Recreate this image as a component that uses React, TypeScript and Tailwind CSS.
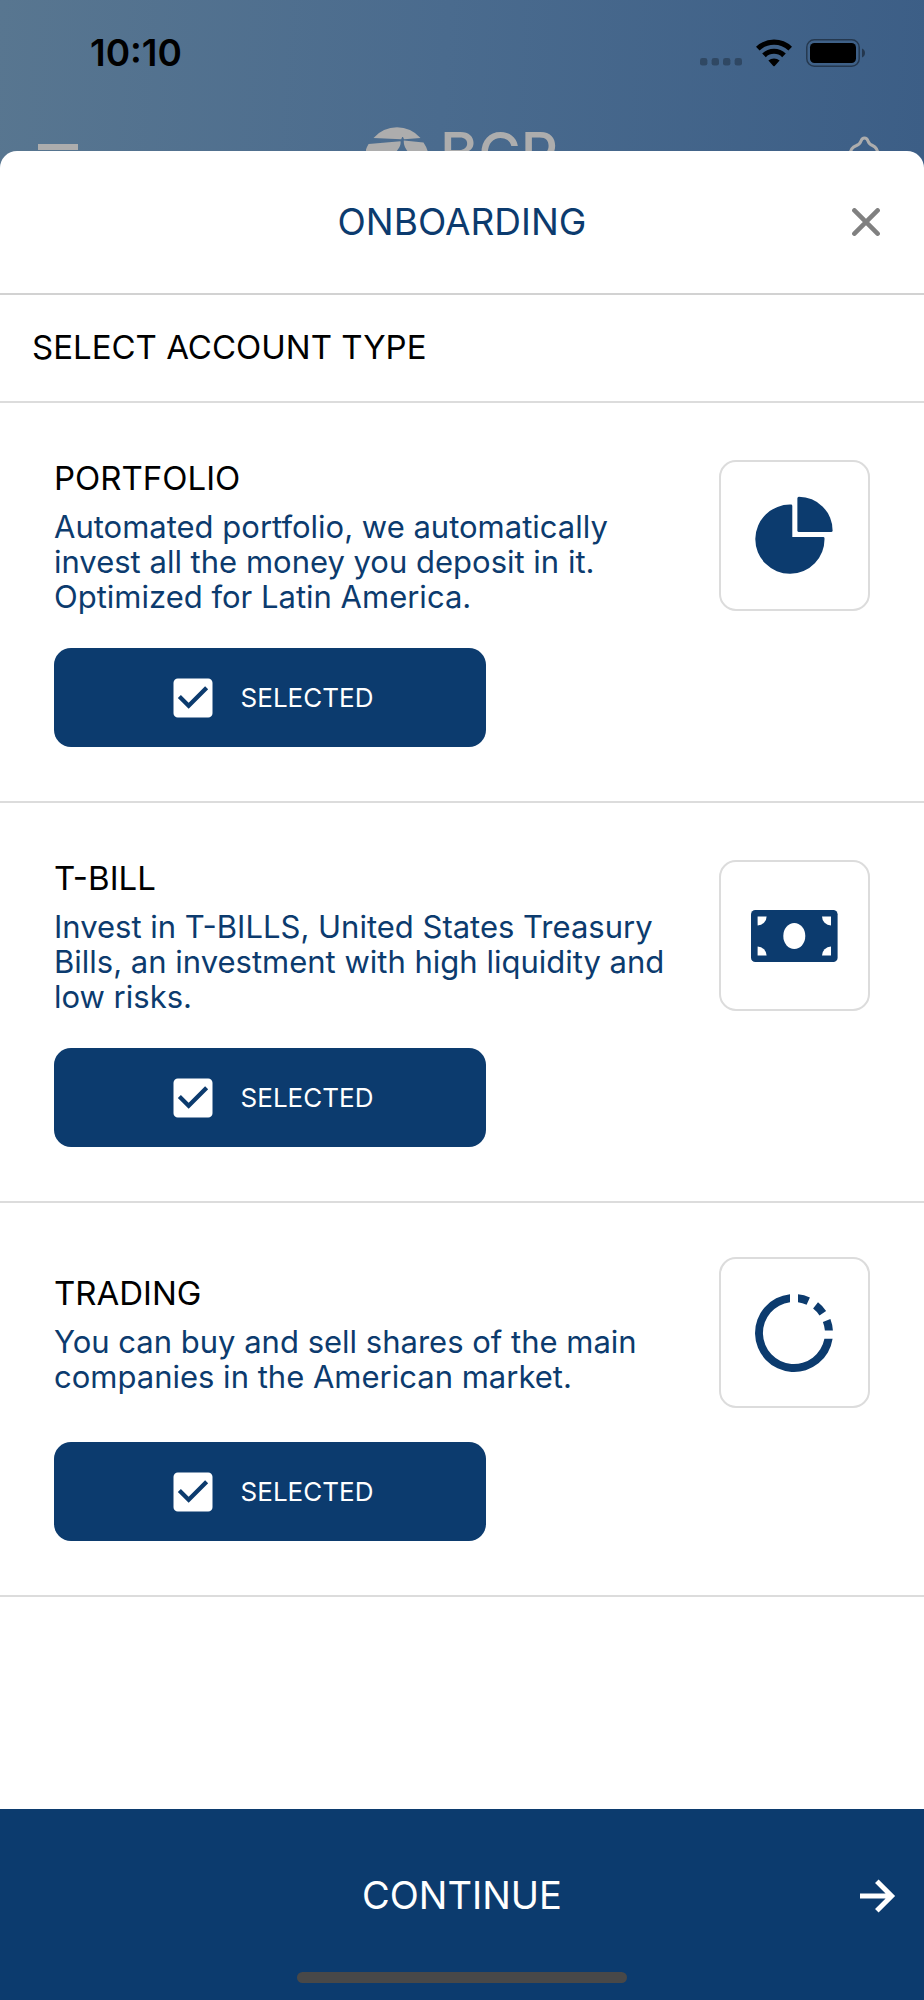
import { useState } from "react";
import type { ReactNode } from "react";
import { MdCheckBox, MdCheckBoxOutlineBlank } from "react-icons/md";

type Account = {
  id: string;
  title: string;
  description: string;
  icon: ReactNode;
};

function PieIcon() {
  return (
    <svg viewBox="0 -1 84 84" className="size-[84px]" fill="currentColor" aria-hidden="true">
      <path d="M38 9.6q1.3 0 1.3 1.3V41.9H70.2q1.3 0 1.3 1.3A34.6 34.6 0 1 1 38 9.6Z" />
      <path d="M44.4 3.2q0-1.5 1.5-1.5A33.8 33.8 0 0 1 79.6 35.5q0 1.5-1.5 1.5H45.9q-1.5 0-1.5-1.5Z" />
    </svg>
  );
}

function BanknoteIcon() {
  return (
    <svg viewBox="1 0 88 52" className="h-[52px] w-[88px]" fill="currentColor" aria-hidden="true">
      <rect x="1" width="86.6" height="52" rx="4.3" />
      <g fill="#ffffff">
        <ellipse cx="44.3" cy="26" rx="11" ry="13" />
        <path d="M7.6 6.4h9a9 9 0 0 1-9 9z" />
        <path d="M81 6.4h-9a9 9 0 0 0 9 9z" />
        <path d="M7.6 45.6h9a9 9 0 0 0-9-9z" />
        <path d="M81 45.6h-9a9 9 0 0 1 9-9z" />
      </g>
    </svg>
  );
}

function RingIcon() {
  return (
    <svg viewBox="-41 -42 84 84" className="size-[84px]" fill="currentColor" aria-hidden="true">
      <path d="M38.6 5.8A39 39 0 1 1-4-38.8V-30.7A31 31 0 1 0 30.4 5.8Z" />
      <path d="M4-38.8A39 39 0 0 1 15.9-35.6L12.6-28.3A31 31 0 0 0 4-30.7Z" />
      <path d="M24-30.7A39 39 0 0 1 32.1-22.1L25.5-17.6A31 31 0 0 0 19.1-24.4Z" />
      <path d="M36.4-14A39 39 0 0 1 38.9-2.5H30.9A31 31 0 0 0 28.9-11.1Z" />
    </svg>
  );
}

const accounts: Account[] = [
  {
    id: "portfolio",
    title: "PORTFOLIO",
    description:
      "Automated portfolio, we automatically invest all the money you deposit in it. Optimized for Latin America.",
    icon: <PieIcon />,
  },
  {
    id: "t-bill",
    title: "T-BILL",
    description:
      "Invest in T-BILLS, United States Treasury Bills, an investment with high liquidity and low risks.",
    icon: <BanknoteIcon />,
  },
  {
    id: "trading",
    title: "TRADING",
    description: "You can buy and sell shares of the main companies in the American market.",
    icon: <RingIcon />,
  },
];

function StatusBar() {
  return (
    <div className="flex h-[105px] items-center justify-between pr-[58px] pl-[90px] text-black">
      <span className="text-[37px] font-semibold">10:10</span>
      <div className="flex items-center gap-[14px]">
        <svg viewBox="0 0 42 28" className="h-7 w-[42px]" aria-hidden="true">
          <g fill="#000000" fillOpacity="0.28">
            <rect x="0" y="19" width="7.4" height="7.6" rx="2.4" />
            <rect x="11.6" y="19" width="7.4" height="7.6" rx="2.4" />
            <rect x="23" y="19" width="7.4" height="7.6" rx="2.4" />
            <rect x="34.6" y="19" width="7.4" height="7.6" rx="2.4" />
          </g>
        </svg>
        <svg viewBox="0 0 36 28" className="h-7 w-9" aria-hidden="true">
          <g fill="none" stroke="#000000" strokeWidth="5.2">
            <path d="M1.8 9.6A23.5 23.5 0 0 1 34.2 9.6" />
            <path d="M8 16.3A14.4 14.4 0 0 1 28 16.3" />
          </g>
          <path d="M12.4 21.6A8.2 8.2 0 0 1 23.6 21.6L18.7 26.9q-.7.7-1.4 0Z" />
        </svg>
        <svg viewBox="0 0 60 28" className="h-7 w-[60px]" aria-hidden="true">
          <rect x="0.8" y="0.8" width="52.4" height="26.4" rx="7.5" fill="none" stroke="#000000" strokeOpacity="0.42" strokeWidth="1.5" />
          <rect x="4" y="4" width="46" height="20" rx="4.5" />
          <path d="M56 9.5c4 1.5 4 7.5 0 9z" fillOpacity="0.42" />
        </svg>
      </div>
    </div>
  );
}

function AppHeader() {
  return (
    <header className="h-[170px] overflow-hidden bg-[linear-gradient(94deg,#587690_0%,#4a6b8e_48%,#3c5e86_100%)]">
      <StatusBar />
      <div className="flex h-[106px] items-center justify-between px-[38px] text-[#adadad]">
        <button type="button" aria-label="Menu" className="flex w-[50px] flex-col gap-[5px]">
          <span className="h-[6px] w-10 bg-current" />
          <span className="h-[6px] w-10 bg-current" />
          <span className="h-[6px] w-10 bg-current" />
        </button>
        <div className="flex items-start gap-[12px]">
          <svg viewBox="0 0 62 62" className="size-[62px]" fill="currentColor" aria-hidden="true">
            <path d="M7.5 11A31 31 0 0 1 54.5 11L38 12.3 37 10h-.8l-1 2.3Z" />
            <path d="M2.6 17 34.5 14.2C35.5 20 31 22 29.5 27V60H14A31 31 0 0 1 2.6 17Z" />
            <path d="M57.5 15.5A31 31 0 0 1 48 60H43V26C40 22 37.5 19 37.8 13.5Z" />
          </svg>
          <span className="text-[58px] leading-[52px] font-medium">BCP</span>
        </div>
        <button type="button" aria-label="Notifications" className="flex w-[50px] justify-end">
          <svg viewBox="0 0 44 44" className="size-11" fill="none" stroke="currentColor" strokeWidth="3" aria-hidden="true">
            <path d="M8 34V19Q8 12 14.5 9.5 18 8 19 5 20 2 22.5 2T26 5Q27 8 30.5 9.5 36 12 36 19V34Z" />
          </svg>
        </button>
      </div>
    </header>
  );
}

function AccountRow({ account }: { account: Account }) {
  const [selected, setSelected] = useState(true);
  const Box = selected ? MdCheckBox : MdCheckBoxOutlineBlank;
  return (
    <li className="flex flex-col gap-[34px] border-b-2 border-[#dcdcdc] p-[54px]">
      <div className="flex items-center justify-between gap-6">
        <div className="flex flex-1 flex-col gap-[10px]">
          <h3 className="text-[33px] leading-[42px] text-black">{account.title}</h3>
          <p className="text-[31px] leading-[35px] text-[#0c3b6e]">{account.description}</p>
        </div>
        <div className="flex size-[151px] shrink-0 items-center justify-center rounded-[17px] border-2 border-[#dcdcdc] text-[#0c3b6e]">
          {account.icon}
        </div>
      </div>
      <label className="flex h-[99px] w-[432px] max-w-full cursor-pointer items-center justify-center gap-[22px] rounded-[17px] bg-[#0c3b6e] text-white">
        <input
          type="checkbox"
          className="sr-only"
          checked={selected}
          onChange={(event) => setSelected(event.target.checked)}
        />
        <Box className="size-[52px]" aria-hidden="true" />
        <span className="text-[26px]">SELECTED</span>
      </label>
    </li>
  );
}

export default function App() {
  return (
    <div className="flex min-h-screen flex-col bg-white font-['Inter',sans-serif]">
      <AppHeader />
      <main className="relative -mt-[19px] flex flex-1 flex-col rounded-t-[17px] bg-white">
        <div className="grid h-[144px] grid-cols-[1fr_auto_1fr] items-center border-b-2 border-[#d2d2d2] px-9">
          <h1 className="col-start-2 text-[37px] text-[#0c3b6e]">ONBOARDING</h1>
          <button type="button" aria-label="Close" className="justify-self-end p-2 text-[#808080]">
            <svg viewBox="0 0 28 28" className="size-7" stroke="currentColor" strokeWidth="4.6" strokeLinecap="round" aria-hidden="true">
              <path d="M2.4 2.4 25.6 25.6M25.6 2.4 2.4 25.6" />
            </svg>
          </button>
        </div>
        <h2 className="flex h-[108px] items-center border-b-2 border-[#dcdcdc] px-8 text-[33px] text-black">
          SELECT ACCOUNT TYPE
        </h2>
        <ul>
          {accounts.map((account) => (
            <AccountRow key={account.id} account={account} />
          ))}
        </ul>
      </main>
      <footer className="flex flex-col bg-[#0c3b6e] pb-[17px] text-white">
        <button type="button" className="grid h-[163px] w-full grid-cols-[1fr_auto_1fr] items-center px-7 pt-[10px]">
          <span className="col-start-2 text-[38px]">CONTINUE</span>
          <svg viewBox="0 0 36 34" className="h-[34px] w-9 justify-self-end" fill="none" stroke="currentColor" strokeWidth="5" aria-hidden="true">
            <path d="M0 17H31M16.8 2.2 31.6 17 16.8 31.8" />
          </svg>
        </button>
        <div className="h-[11px] w-[330px] self-center rounded-full bg-[#484848]" />
      </footer>
    </div>
  );
}
